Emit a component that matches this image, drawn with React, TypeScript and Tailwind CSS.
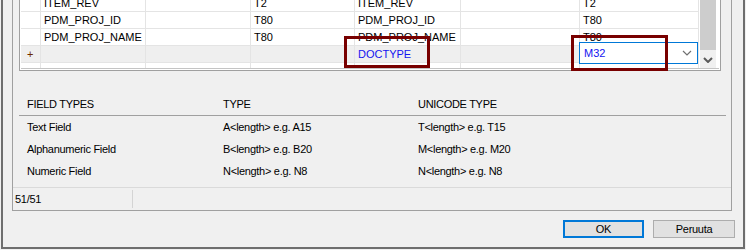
import React from "react";

type Row = string[];

const rows: Row[] = [
  ["ITEM_REV", "", "T2", "ITEM_REV", "", "T2"],
  ["PDM_PROJ_ID", "", "T80", "PDM_PROJ_ID", "", "T80"],
  ["PDM_PROJ_NAME", "", "T80", "PDM_PROJ_NAME", "", "T80"],
];

const colW = ["w-[105px]", "w-[105px]", "w-[104px]", "w-[106px]", "w-[119px]", "w-[119px]"];

const fieldTypes = [
  ["Text Field", "A<length> e.g. A15", "T<length> e.g. T15"],
  ["Alphanumeric Field", "B<length> e.g. B20", "M<length> e.g. M20"],
  ["Numeric Field", "N<length> e.g. N8", "N<length> e.g. N8"],
];

function Chevron({ className, bold }: { className?: string; bold?: boolean }) {
  return (
    <svg width="10" height="6" viewBox="0 0 10 6" className={className}>
      <path d="M1 1 L5 5 L9 1" fill="none" stroke="currentColor" strokeWidth={bold ? 2 : 1.2} />
    </svg>
  );
}

function GridRow({ cells, isNew }: { cells: Row; isNew?: boolean }) {
  return (
    <div className={`flex h-[17px] shrink-0 border-b border-[#e4e4e4] ${isNew ? "bg-[#efefef]" : "bg-white"}`}>
      <div className="w-[20px] shrink-0 border-r border-[#e4e4e4] pl-[6px] leading-[16px] text-[#6b2a00]">
        {isNew ? "+" : ""}
      </div>
      {cells.map((c, i) => (
        <div
          key={i}
          className={`${colW[i]} shrink-0 border-r border-[#e4e4e4] pl-[3px] leading-[16px] whitespace-nowrap overflow-hidden ${
            isNew ? "text-[#1414f0]" : "text-black"
          }`}
        >
          {c}
        </div>
      ))}
    </div>
  );
}

function Grid() {
  return (
    <div className="ml-[6px] w-[702px] h-[71px] border-x border-b border-[#a0a0a0] bg-white px-px pb-px">
      <div className="relative flex h-[69px] border-b border-[#c4c4c4] overflow-hidden font-['Liberation_Sans',Arial,sans-serif] text-[11px]">
        <div className="flex w-[678px] flex-col mt-[-5px]">
          {rows.map((r, i) => (
            <GridRow key={i} cells={r} />
          ))}
          <GridRow cells={["", "", "", "DOCTYPE", "", ""]} isNew />
          <div className="flex flex-1">
            <div className="w-[20px] shrink-0 border-r border-[#e4e4e4]" />
            {colW.map((w, i) => (
              <div key={i} className={`${w} shrink-0 border-r border-[#e4e4e4]`} />
            ))}
          </div>
        </div>
        {/* scrollbar */}
        <div className="ml-px flex w-[16px] flex-col bg-[#f0f0f0]">
          <div className="h-[50px] bg-[#cdcdcd]" />
          <div className="flex flex-1 items-center justify-center text-[#5a5a5a]">
            <Chevron className="mt-[2px]" bold />
          </div>
        </div>
        {/* active combobox editor */}
        <div className="absolute left-[558px] top-[42px] flex h-[22px] w-[119px] items-center border border-[#0078d7] bg-white pl-[4px] pr-[5px] text-[#1414f0]">
          <span className="flex-1">M32</span>
          <Chevron className="text-[#707070]" />
        </div>
      </div>
    </div>
  );
}

function FieldTypes() {
  return (
    <div className="mt-[23px] mx-[6px] mr-[5px] font-['Liberation_Sans',Arial,sans-serif] text-[11px] tracking-[-0.3px] text-black">
      <div className="flex h-[22px] items-center border-b border-[#a0a0a0] pl-[8px]">
        <div className="w-[196px]">FIELD TYPES</div>
        <div className="w-[195px]">TYPE</div>
        <div>UNICODE TYPE</div>
      </div>
      {fieldTypes.map((f) => (
        <div key={f[0]} className="flex h-[22px] items-center pl-[8px]">
          <div className="w-[196px]">{f[0]}</div>
          <div className="w-[195px]">{f[1]}</div>
          <div>{f[2]}</div>
        </div>
      ))}
    </div>
  );
}

export default function App() {
  return (
    <div className="relative w-[746px] h-[250px] overflow-hidden bg-[#f0f0f0] pl-px font-['Liberation_Sans',Arial,sans-serif]">
      <div className="flex h-[249px] w-[744px] flex-col border-x-2 border-b-2 border-[#6e6e6e]">
        <div className="ml-[9px] flex h-[211px] w-[720px] flex-col border-x border-b border-[#a0a0a0]">
          <Grid />
          <FieldTypes />
          <div className="mt-auto flex h-[23px] border-t border-[#dadada] text-[11px] tracking-[-0.3px]">
            <div className="flex w-[120px] items-center border-r border-[#d4d4d4] my-[2px] pl-[2px]">51/51</div>
          </div>
        </div>
        <div className="mt-[9px] flex justify-end gap-[9px] pr-[8px] text-[11px] tracking-[-0.3px]">
          <button className="flex h-[18px] w-[81px] items-center justify-center border-2 border-[#0078d7] bg-[#e1e1e1] text-black">
            OK
          </button>
          <button className="flex h-[18px] w-[82px] items-center justify-center border border-[#adadad] bg-[#e1e1e1] text-black">
            Peruuta
          </button>
        </div>
      </div>

      {/* annotation boxes */}
      <div className="absolute left-[344px] top-[36px] h-[32px] w-[86px] border-[3px] border-[#780000]" />
      <div className="absolute left-[571px] top-[35px] h-[36px] w-[97px] border-[3px] border-[#780000]" />
    </div>
  );
}
